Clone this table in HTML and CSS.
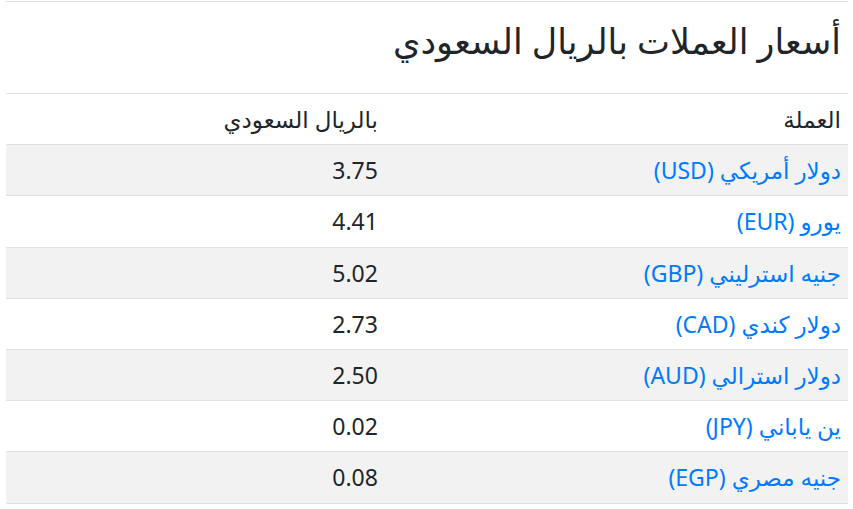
FILE: index.html
```html
<!DOCTYPE html>
<html lang="ar" dir="rtl">
<head>
<meta charset="utf-8">
<link rel="stylesheet" href="styles.css">
</head>
<body>
<div class="wrap">
  <h2 class="title">أسعار العملات بالريال السعودي</h2>
  <table class="rates">
    <thead>
      <tr><th class="c1">العملة</th><th>بالريال السعودي</th></tr>
    </thead>
    <tbody>
      <tr><td><a href="#">دولار أمريكي (USD)</a></td><td>3.75</td></tr>
      <tr><td><a href="#">يورو (EUR)</a></td><td>4.41</td></tr>
      <tr><td><a href="#">جنيه استرليني (GBP)</a></td><td>5.02</td></tr>
      <tr><td><a href="#">دولار كندي (CAD)</a></td><td>2.73</td></tr>
      <tr><td><a href="#">دولار استرالي (AUD)</a></td><td>2.50</td></tr>
      <tr><td><a href="#">ين ياباني (JPY)</a></td><td>0.02</td></tr>
      <tr><td><a href="#">جنيه مصري (EGP)</a></td><td>0.08</td></tr>
    </tbody>
  </table>
</div>
</body>
</html>
```
FILE: styles.css
```css
html, body { margin: 0; padding: 0; background: #fff; }
body {
  font-family: "Noto Sans", "DejaVu Sans", sans-serif;
  color: #212529;
}
.wrap {
  margin: 1px 5px 0 6px;
  border-top: 1px solid #dee2e6;
}
.title {
  font-size: 35px;
  font-weight: 500;
  line-height: 44px;
  margin: 0;
  padding: 17px 7px 0 0;
  height: 91px;
  box-sizing: border-box;
}
.rates {
  width: 100%;
  border-collapse: collapse;
  font-size: 23px;
}
.rates th, .rates td {
  text-align: right;
  font-weight: 400;
  padding: 10.1px 7px;
  line-height: 30px;
  border-top: 1px solid #dee2e6;
}
.rates .c1 { width: 55%; }
.rates tbody tr:nth-child(odd) { background: #f2f2f2; }
.rates tbody tr:last-child td { border-bottom: 1px solid #dee2e6; }
.rates a { color: #007bff; text-decoration: none; }
```
